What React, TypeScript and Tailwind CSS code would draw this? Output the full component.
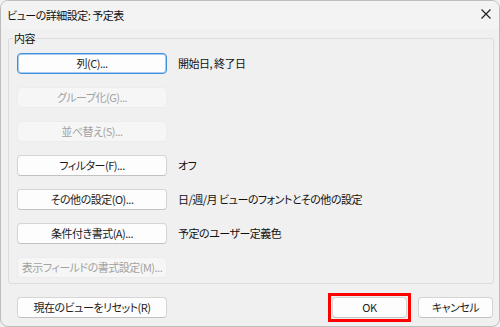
import React from "react";

const font = {
  fontFamily: '"Noto Sans CJK JP", "Noto Sans", sans-serif',
};

type Row = { label: string; value?: string; disabled?: boolean; focused?: boolean };

const rows: Row[] = [
  { label: "列(C)...", value: "開始日, 終了日", focused: true },
  { label: "グループ化(G)...", disabled: true },
  { label: "並べ替え(S)...", disabled: true },
  { label: "フィルター(F)...", value: "オフ" },
  { label: "その他の設定(O)...", value: "日/週/月 ビューのフォントとその他の設定" },
  { label: "条件付き書式(A)...", value: "予定のユーザー定義色" },
  { label: "表示フィールドの書式設定(M)...", disabled: true },
];

function DlgButton({
  children,
  disabled,
  focused,
  className = "",
}: {
  children: React.ReactNode;
  disabled?: boolean;
  focused?: boolean;
  className?: string;
}) {
  let look = "bg-[#fdfdfd] border border-[#d5d5d5] border-b-[#c2c2c2] text-[#1b1b1b]";
  if (disabled) look = "bg-[#f6f6f6] border border-[#ececec] text-[#a2a2a2]";
  if (focused) look = "bg-[#fdfdfd] border border-[#3f8fdf] shadow-[inset_0_0_0_1px_#a6cbef] text-[#1b1b1b]";
  return (
    <div
      className={`h-[21px] flex items-center justify-center whitespace-nowrap rounded-[4px] text-[11px] leading-none ${look} ${className}`}
    >
      {children}
    </div>
  );
}

export default function App() {
  return (
    <div
      className="w-[500px] h-[327px] bg-[#f0f0f0] [font-feature-settings:'palt'] tracking-[-0.5px] text-[#111]"
      style={font}
    >
      <div className="w-[500px] h-[327px] border border-[#bdbdbd] rounded-[8px] overflow-hidden flex flex-col bg-[#f0f0f0]">
        {/* title bar */}
        <div className="h-[28px] shrink-0 bg-[#f3f3f3] flex items-center pl-[6px] pr-[8px]">
          <span className="text-[11px] leading-none">ビューの詳細設定: 予定表</span>
          <svg className="ml-auto mt-[-2px]" width="10" height="10" viewBox="0 0 10 10">
            <path d="M0.5 0.5 L9.5 9.5 M9.5 0.5 L0.5 9.5" stroke="#1b1b1b" strokeWidth="1.1" />
          </svg>
        </div>

        {/* group box */}
        <div className="relative ml-[7px] mt-[9px] w-[486px] h-[246px] border border-[#dcdcdc] rounded-[3px] pt-[14px] pl-[8px] pb-[5px]">
          <span className="absolute left-[4px] top-[-9px] px-px bg-[#f0f0f0] text-[11px] leading-[16px]">
            内容
          </span>
          <div className="flex flex-col gap-[13px]">
            {rows.map((r) => (
              <div key={r.label} className="flex items-center">
                <DlgButton disabled={r.disabled} focused={r.focused} className="w-[150px]">
                  {r.label}
                </DlgButton>
                {r.value && <span className="ml-[11px] text-[11px] leading-none">{r.value}</span>}
              </div>
            ))}
          </div>
        </div>

        {/* bottom buttons */}
        <div className="flex items-center ml-[16px] mt-[9px] pr-[6px]">
          <DlgButton className="w-[150px]">現在のビューをリセット(R)</DlgButton>
          <div className="ml-auto border-[3px] border-[#ff0000] p-px">
            <DlgButton className="w-[75px]">OK</DlgButton>
          </div>
          <DlgButton className="w-[75px] ml-[7px]">キャンセル</DlgButton>
        </div>
      </div>
    </div>
  );
}
